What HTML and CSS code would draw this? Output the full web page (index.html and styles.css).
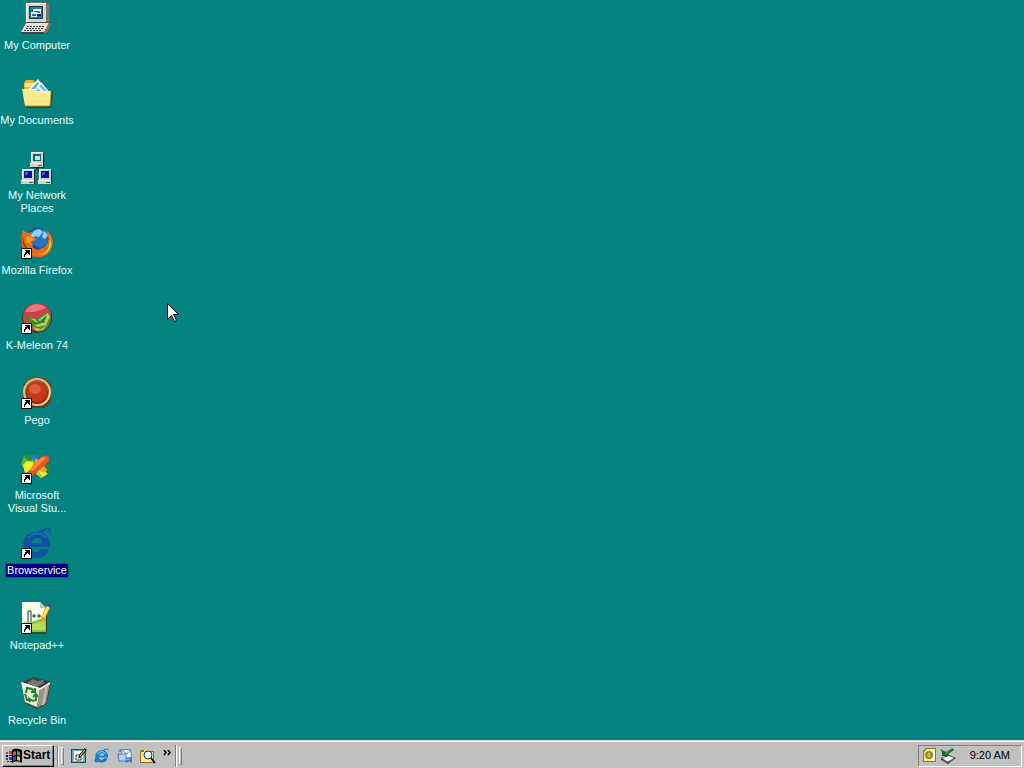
FILE: index.html
```html
<!DOCTYPE html>
<html lang="en">
<head>
<meta charset="utf-8">
<title>Desktop</title>
<link rel="stylesheet" href="styles.css">
</head>
<body>
<svg class="defs" aria-hidden="true">
  <defs>
    <g id="shortcut" shape-rendering="crispEdges">
      <path d="M0 21h11v11H0z" fill="#000"/><path d="M1 22h9v9H1z" fill="#fff"/>
      <path d="M4 23h5v5H8v-1H7v-1H6v1H5v1H4v2H3v-3h1v-2h1v-1H4z" fill="#000"/>
    </g>
    <g id="pc">
      <path d="M1 0h12v11H1z" fill="#d4d0c8"/><path d="M13 1h1v11H2v-1h11z" fill="#222"/>
      <path d="M1 0h12v1H2v10H1z" fill="#fff"/>
      <path d="M0 11h13v4H0z" fill="#d4d0c8"/><path d="M13 11h1v5H1v-1h12z" fill="#222"/>
      <path d="M8 13h4v1H8z" fill="#555"/><path d="M0 11h13v1H0z" fill="#f5f3eb"/>
    </g>
    <g id="explorer">
      <path d="M9 20h20c1-9-5-15-13-15C8 5 2 10 2 18s6 13 14 13c6 0 10-3 12-9h-8c-1 2-2 3-4 3-4 0-6-2-7-5zm1-4c1-3 3-5 6-5 3 0 5 2 5 5z"/>
      <path d="M4 18C-4 29 1 35 11 27 4 29 3 27 6 23zM15 6c9-7 18-8 14 5 2-9-3-10-8-5z"/>
    </g>
  </defs>
</svg>

<main class="desktop">
  <button class="shortcut">
    <svg class="icon" viewBox="0 0 32 32">
      <path d="M6 0h20l3 3v17l-3 3H5l-1-2V2z" fill="#6b6b67"/>
      <path d="M5 1h20v19H5z" fill="#d8d5c9"/><path d="M5 1h20v1H6v18H5z" fill="#fff"/>
      <path d="M25 1l3 3v16l-3 2z" fill="#777670"/>
      <path d="M8 4h14v13H8z" fill="#17384d"/><path d="M9 5h12v11H9z" fill="#13869a"/>
      <path d="M11 8h9v6h-9z" fill="#092b63"/><path d="M12 7h8v5h-8z" fill="#fff"/><path d="M13 9h6v2h-6z" fill="#247bad"/><path d="M10 10h6v5h-6z" fill="#d7edf2"/><path d="M11 12h4v2h-4z" fill="#2872a2"/>
      <path d="M5 20h22l3 2-3 8-2 2H1l-1-2z" fill="#444"/>
      <path d="M5 21h23l-5 9H0z" fill="#e5e2d7"/><path d="M28 21l2 1-3 8-4 2v-2z" fill="#7c7970"/>
      <path d="M6 24.500h18M5 26.500h17M3 28.500h18" stroke="#333" stroke-dasharray="2 1"/>
    </svg><span class="label">My Computer</span>
  </button>
  <button class="shortcut">
    <svg class="icon" viewBox="0 0 32 32">
      <path d="M3 6l2-3h7l3 3v9H3z" fill="#e4b52f"/><path d="M4 6h10v4H4z" fill="#ffe48a"/>
      <path d="M7 13L17 2l8 12-6 4z" fill="#f7fdff"/><path d="M10 12l7-7 5 8-6 4z" fill="#4b9fdd"/><path d="M12 13l5-5 3 5z" fill="#b9e7ff"/>
      <path d="M20 5l11 13-5 4-10-13z" fill="#fff"/><path d="M20 7l9 10-2 2-9-10z" fill="#76bce5"/>
      <path d="M3 29l2 2h25l2-17-2 1z" fill="#403c22"/>
      <path d="M1 12h13l3 2h13l-1 15H4z" fill="#ffe78c"/><path d="M2 13h11l3 2h13" fill="none" stroke="#fff9d0"/><path d="M4 29h25l1-14" fill="none" stroke="#b99438" stroke-width="1"/>
    </svg><span class="label">My Documents</span>
  </button>
  <button class="shortcut">
    <svg class="icon" viewBox="0 0 32 32" shape-rendering="crispEdges">
      <use href="#pc" x="9"/><path d="M12 2h8v7h-8z" fill="#176770"/><path d="M14 4h5v4h-5z" fill="#b6e6ea"/>
      <path d="M15 16h2v3h8v2M15 19H7v2" fill="none" stroke="#252525"/>
      <use href="#pc" y="17"/><path d="M3 19h8v7H3z" fill="#0712a0"/><path d="M4 20h3v3H4z" fill="#365bd0"/>
      <use href="#pc" x="17" y="17"/><path d="M20 19h8v7h-8z" fill="#0712a0"/><path d="M21 20h3v3h-3z" fill="#365bd0"/>
    </svg><span class="label">My Network<br>Places</span>
  </button>
  <button class="shortcut">
    <svg class="icon" viewBox="0 0 32 32">
      <circle cx="17" cy="15" r="14" fill="#1650a1"/><path d="M10 5c5-5 13-4 17 1l-1 11-7 4-8-4z" fill="#2675c5"/>
      <path d="M13 4l5-2 4 3-4 5-4-1-3 5-2-5zM23 4l4 4-3 4-3-2z" fill="#8fd5f5"/>
      <path d="M2 3l4 3 5-1-1 4 6 3-5 3 1 6 5 2 6-3c6-4 5-11 2-17 6 4 8 10 6 16-2 8-8 12-15 11C6 30 0 22 1 14 0 10 1 7 2 3z" fill="#e96b12"/>
      <path d="M28 9c6 12-2 20-12 19 10-1 13-6 13-19z" fill="#ffd43c"/><path d="M2 9c0 8 4 13 10 16C5 24 0 18 2 9z" fill="#a92c0c"/><path d="M6 9l4 1 4 3-5 1 1 4-5-3z" fill="#f79a28"/>
      <use href="#shortcut"/>
    </svg><span class="label">Mozilla Firefox</span>
  </button>
  <button class="shortcut">
    <svg class="icon" viewBox="0 0 32 32">
      <circle cx="16" cy="16" r="15" fill="#4b2b1b"/><circle cx="16" cy="15" r="14" fill="#d43e48"/><path d="M4 10C8 1 20 0 25 6L13 10z" fill="#e87980"/>
      <path d="M2 12l11 5 14-7 3 6c0 9-6 13-13 14l-6-5z" fill="#52862d"/>
      <path d="M9 16l8 2 10-7 2 4-4 8-8 2-4-2 6-1 3-3-7 1z" fill="#a8d463"/><path d="M14 17l5 2 7-6-3 8-6-1z" fill="#38783a"/><path d="M12 25l8 2 7-5-5 6-7 1z" fill="#b4c753"/>
      <use href="#shortcut"/>
    </svg><span class="label">K-Meleon 74</span>
  </button>
  <button class="shortcut">
    <svg class="icon" viewBox="0 0 32 32">
      <path d="M9 1h15l6 7v16l-6 7H8l-6-7V8z" fill="#643e22"/><circle cx="16" cy="15" r="14" fill="#edbd79"/><circle cx="16" cy="15" r="12" fill="#a75c31"/><circle cx="16" cy="16" r="11" fill="#8f2b19"/><circle cx="16" cy="15" r="10" fill="#c83720"/><ellipse cx="14" cy="12" rx="6" ry="5" fill="#da5c41"/><path d="M28 9c4 9-1 18-9 20 7-4 10-10 9-20z" fill="#ffe1a2"/>
      <use href="#shortcut"/>
    </svg><span class="label">Pego</span>
  </button>
  <button class="shortcut">
    <svg class="icon" viewBox="0 0 32 32">
      <path d="M0 12l3-8 7-1 6 5-3 10-8 3z" fill="#62b52c"/><path d="M2 13l4-4 7 1-3 8-6 3z" fill="#e9ef28"/><path d="M3 5l6-3 5 4-6 3z" fill="#278c48"/>
      <path d="M16 18l7-8 6 4-2 8-7 4-5-4z" fill="#b2d52c"/><path d="M22 12l4-2 4 5-2 6-3 1z" fill="#258746"/><path d="M18 19l5-2 3 5-4 3z" fill="#ffe723"/><path d="M10 4l5-1 4 5-4 4z" fill="#2584ce"/>
      <path d="M14 7l5 1 7 10-4 3-8-7z" fill="#f0a72a"/><path d="M7 20L19 6l5-3 4 2v4L14 22l-5 3z" fill="#e75224"/><path d="M8 18L21 5l4 1-13 13z" fill="#ff8a32"/>
      <use href="#shortcut"/>
    </svg><span class="label">Microsoft<br>Visual Stu...</span>
  </button>
  <button class="shortcut selected">
    <svg class="icon" viewBox="0 0 32 32"><use href="#explorer" fill="#1250a5"/><path d="M7 11c5-6 13-6 18 0" fill="none" stroke="#2469b5" stroke-width="2"/><use href="#shortcut"/></svg><span class="label">Browservice</span>
  </button>
  <button class="shortcut">
    <svg class="icon" viewBox="0 0 32 32">
      <path d="M2 1h19l5 5v26H2z" fill="#324a35"/><path d="M1 0h18l6 6v24H1z" fill="#f8fff2"/><path d="M3 20c8 2 14-4 22-4v14H3z" fill="#83c53f"/><path d="M4 23c8 1 14-4 20-4v9H4z" fill="#afe15a"/><path d="M19 0v6h6" fill="#b5cdbd"/>
      <path d="M7 20V9h3v11M11 14h4m-2-2v4M16 14h4m-2-2v4" fill="none" stroke="#27371f"/>
      <path d="M19 21l1-6 5-11 4 2-6 13z" fill="#e2a421"/><path d="M21 14l6-11 2 1-6 12z" fill="#ffe56b"/><path d="M25 3l2-3 3 2-1 4z" fill="#405870"/>
      <use href="#shortcut"/>
    </svg><span class="label">Notepad++</span>
  </button>
  <button class="shortcut">
    <svg class="icon" viewBox="0 0 32 32">
      <path d="M0 5L13 0l17 5-4 22-10 5L4 26z" fill="#45433e"/><path d="M1 6l11-4 16 3-10 6z" fill="#302e2c"/><path d="M6 6l6-4 4 2 6-1 2 3-8 4z" fill="#777"/><path d="M0 5l19 6-3 19L4 25z" fill="#e8e9dc"/><path d="M19 11l10-5-4 20-9 5z" fill="#999489"/><path d="M1 6l18 6 10-6" fill="none" stroke="#fff" stroke-width="1.5"/><path d="M26 8l-4 20" stroke="#c5c0b3" stroke-width="2"/>
      <path d="M5 16l1-5 5 1 2 3m-3 0h4v-4M4 17l2 6h3m-2-2l3 2-2 2m3-1l4-1v-6m-3 3l3-3 2 3" fill="none" stroke="#24802b" stroke-width="2"/>
    </svg><span class="label">Recycle Bin</span>
  </button>
</main>

<svg class="cursor" viewBox="0 0 12 20" aria-hidden="true"><path d="M.5.5v16l4-4 3 6 2-1-3-6h5z" fill="#fff" stroke="#000"/></svg>

<footer class="taskbar">
  <button class="start">
    <svg class="small" viewBox="0 0 16 16">
      <path d="M6 2c4-2 6-1 10 0v13c-4-2-6-2-10 0z" fill="#000"/>
      <path d="M7 4l3-1v4L7 8z" fill="#e54b45"/><path d="M11 3l3 1v4l-3-1z" fill="#43a447"/><path d="M7 9l3-1v4l-3 1z" fill="#334bd0"/><path d="M11 8l3 1v4l-3-1z" fill="#e7d348"/>
      <path d="M0 4h2v2H0zm3-1h3v3H3z" fill="#b83744"/><path d="M0 7h2v2H0zm3 0h3v1H3z" fill="#111"/><path d="M0 10h2v2H0zm3-1h3v3H3z" fill="#4138ae"/><path d="M1 13h2v1H1zm3 0h2v1H4z" fill="#222"/>
    </svg><span>Start</span>
  </button>
  <span class="divider"></span><span class="grip"></span>
  <nav class="quick" aria-label="Quick Launch">
    <button class="tool" aria-label="Show Desktop"><svg class="small" viewBox="0 0 16 16">
      <path d="M0 1h15v14H0z" fill="#234e55"/><path d="M1 2h13v12H1z" fill="#68acb2"/><path d="M3 3h9v10H3z" fill="#fff"/><path d="M5 7h4M5 7v5h5V9" fill="none" stroke="#34352c"/><path d="M7 11l1-4 6-7 2 2-6 7z" fill="#282a24"/><path d="M9 8l5-6" stroke="#efd76a"/>
    </svg></button>
    <button class="tool" aria-label="Internet Explorer"><svg class="small" viewBox="-1 0 34 34"><use href="#explorer" fill="#147fc3"/><path d="M6 13c5-7 13-7 18-1" fill="none" stroke="#63c3ed" stroke-width="3"/></svg></button>
    <button class="tool" aria-label="Outlook Express"><svg class="small" viewBox="0 0 16 16">
      <path d="M4 1h10l1 9-9 2z" fill="#5d87cc"/><path d="M5 2h8l1 7-8 1z" fill="#eaf3ff"/><path d="M5 2l5 4 3-4" fill="none" stroke="#6689c4"/><path d="M1 6h8v7H2z" fill="#b7d1f3" stroke="#5876ba"/><path d="M1 3l3-2v3M15 9v5l-2 1v-2L9 15l-1-2 5-2V9z" fill="#4476c4"/>
    </svg></button>
    <button class="tool" aria-label="Search"><svg class="small" viewBox="0 0 16 16">
      <path d="M0 3l1-1h5l1 1h7v12H0z" fill="#8c7423"/><path d="M1 4h12v10H1z" fill="#ffe98a"/><path d="M4 1h4v3H4z" fill="#f9cf4a"/><circle cx="8" cy="7" r="4" fill="#d4f5ff" stroke="#233f50"/><path d="M6 7l2-2" stroke="#fff" stroke-width="2"/><path d="M11 10l4 5" stroke="#18191a" stroke-width="2"/>
    </svg></button>
    <button class="more" aria-label="More shortcuts"><svg class="chevrons" viewBox="0 0 9 6"><path d="M1 0l2 2.500L1 5M5 0l2 2.500L5 5" fill="none" stroke="#000" stroke-width="1.500"/></svg></button>
  </nav>
  <span class="divider"></span><span class="grip"></span>
  <div class="tray">
    <svg class="small" viewBox="0 0 16 16"><path d="M4 0h10v14H1V3z" fill="#817c2d"/><path d="M5 1h8v12H2V4z" fill="#f4ee91"/><path d="M10 1l3 3v9H9z" fill="#fffbd4"/><circle cx="7" cy="7" r="3" fill="#f7ec72" stroke="#8a8817" stroke-width="2"/><path d="M5 7h5" stroke="#777014"/></svg>
    <svg class="small" viewBox="0 0 16 16"><path d="M1 10l7-3 8 3-8 6-7-4z" fill="#333"/><path d="M2 10l7-2 5 2-6 4z" fill="#eee"/><path d="M2 12l6 2 6-3" fill="none" stroke="#777"/><path d="M0 1l4 2 2 1 6-4 2 2-6 4 3 2H2V4z" fill="#126c25"/><path d="M5 6l7-5" stroke="#4bb551"/></svg>
    <time class="clock" datetime="09:20">9:20 AM</time>
  </div>
</footer>
</body>
</html>
```

FILE: styles.css
```css
* {
  box-sizing: border-box;
}

body {
  display: flex;
  flex-direction: column;
  height: 100vh;
  margin: 0;
  overflow: hidden;
  background: #04827f;
  font: 11px/13px "Liberation Sans", Arial, sans-serif;
}

button {
  padding: 0;
  border: 0;
  background: none;
  color: inherit;
  font: inherit;
}

svg {
  display: block;
  flex: none;
}

.defs {
  position: absolute;
  width: 0;
  height: 0;
}

/* The last row may run under the taskbar's edge. */
.desktop {
  flex: 1;
  min-height: 0;
  display: grid;
  grid-template-rows: repeat(10, 75px);
  grid-auto-columns: 74px;
  grid-auto-flow: column;
}

.shortcut {
  display: flex;
  flex-direction: column;
  align-items: center;
  gap: 5px;
  padding: 2px 0;
  color: #e4ffff;
}

.icon {
  width: 32px;
  height: 32px;
}

.label {
  padding: 0 1px;
  text-align: center;
  white-space: nowrap;
}

.selected .label {
  background: #000080;
  outline: 1px dotted #31318a;
  color: #fff;
}

.cursor {
  position: absolute;
  left: 167px;
  top: 303px;
  width: 12px;
  height: 20px;
}

.taskbar {
  display: flex;
  align-items: center;
  height: 28px;
  padding: 2px 2px 0;
  border-top: 1px solid #d8d8d8;
  box-shadow: inset 0 1px #fff;
  background: #c0c0c0;
  color: #000;
}

.start {
  display: flex;
  align-items: center;
  gap: 1px;
  height: 22px;
  padding: 0 3px;
  border: 1px solid;
  border-color: #fff #000 #000 #fff;
  box-shadow: inset -1px -1px #808080;
  font-size: 12px;
  font-weight: bold;
}

.small {
  width: 16px;
  height: 16px;
}

.divider {
  width: 2px;
  height: 22px;
  margin-left: 3px;
  border-left: 1px solid #808080;
  border-right: 1px solid #fff;
}

.grip {
  width: 3px;
  height: 18px;
  margin-left: 2px;
  border: 1px solid;
  border-color: #fff #808080 #808080 #fff;
}

.quick {
  display: flex;
  align-items: center;
  gap: 7px;
  margin-left: 7px;
}

.more {
  align-self: flex-start;
  padding-top: 2px;
}

.chevrons {
  width: 9px;
  height: 6px;
}

.tray {
  display: flex;
  align-items: center;
  gap: 2px;
  height: 22px;
  margin-left: auto;
  padding: 0 11px 0 3px;
  border: 1px solid;
  border-color: #808080 #fff #fff #808080;
}

.clock {
  margin-left: 12px;
}
```
